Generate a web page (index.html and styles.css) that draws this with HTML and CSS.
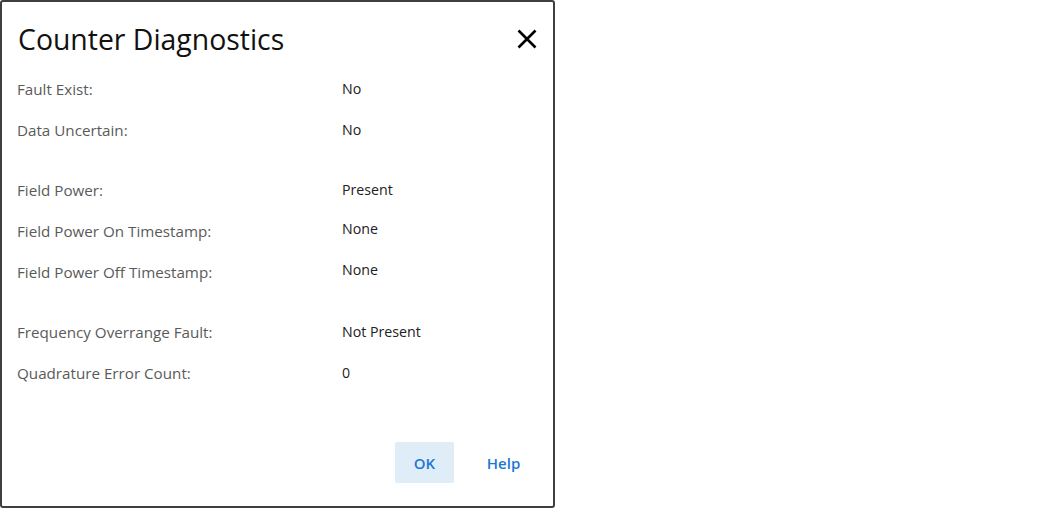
FILE: index.html
```html
<!DOCTYPE html>
<html>
<head>
<meta charset="utf-8">
<link rel="stylesheet" href="styles.css">
</head>
<body>
<div class="dialog">
  <div class="header">
    <h1 class="title">Counter Diagnostics</h1>
    <button class="close" aria-label="Close">
      <svg width="20" height="20" viewBox="0 0 20 20"><path d="M1.5 1.5L18.5 18.5M18.5 1.5L1.5 18.5" stroke="#000" stroke-width="2.6" fill="none"/></svg>
    </button>
  </div>
  <div class="body">
    <div class="group">
      <div class="row"><span class="label">Fault Exist:</span><span class="value">No</span></div>
      <div class="row"><span class="label">Data Uncertain:</span><span class="value">No</span></div>
    </div>
    <div class="group">
      <div class="row"><span class="label">Field Power:</span><span class="value">Present</span></div>
      <div class="row"><span class="label">Field Power On Timestamp:</span><span class="value up">None</span></div>
      <div class="row"><span class="label">Field Power Off Timestamp:</span><span class="value up">None</span></div>
    </div>
    <div class="group">
      <div class="row"><span class="label">Frequency Overrange Fault:</span><span class="value">Not Present</span></div>
      <div class="row"><span class="label">Quadrature Error Count:</span><span class="value">0</span></div>
    </div>
  </div>
  <div class="footer">
    <button class="btn primary">OK</button>
    <button class="btn">Help</button>
  </div>
</div>
</body>
</html>
```

FILE: styles.css
```css
html, body {
  margin: 0;
  padding: 0;
  background: #fff;
}
body {
  font-family: "Open Sans", "Noto Sans", sans-serif;
}
.dialog {
  width: 551px;
  height: 504px;
  border: 2px solid #3f3f3f;
  border-radius: 3px;
  background: #fff;
  display: flex;
  flex-direction: column;
}
.header {
  display: flex;
  align-items: center;
  justify-content: space-between;
  padding: 19px 16px 0 16px;
  height: 36px;
}
.title {
  margin: 0;
  font-size: 28.4px;
  font-weight: 400;
  line-height: 36px;
  color: #111;
}
.close {
  border: 0;
  background: none;
  padding: 0;
  width: 20px;
  height: 20px;
  display: flex;
  cursor: pointer;
}
.body {
  margin-top: 11px;
  display: flex;
  flex-direction: column;
  gap: 19px;
}
.row {
  display: grid;
  grid-template-columns: 325px 1fr;
  height: 41px;
  align-items: center;
  padding-left: 15px;
}
.label {
  font-size: 15.2px;
  color: #5a5a5a;
}
.value {
  font-size: 14.2px;
  color: #222;
}
.value.up {
  position: relative;
  top: -2px;
}
.footer {
  margin-top: 49px;
  display: flex;
  justify-content: flex-end;
  gap: 20px;
  padding-right: 20px;
}
.btn {
  width: 59px;
  height: 41px;
  border: 0;
  border-radius: 2px;
  background: none;
  font-family: "Open Sans", "Noto Sans", sans-serif;
  font-size: 15px;
  font-weight: 600;
  color: #1a78d2;
  cursor: pointer;
}
.btn.primary {
  background: #dfedf9;
}
```
